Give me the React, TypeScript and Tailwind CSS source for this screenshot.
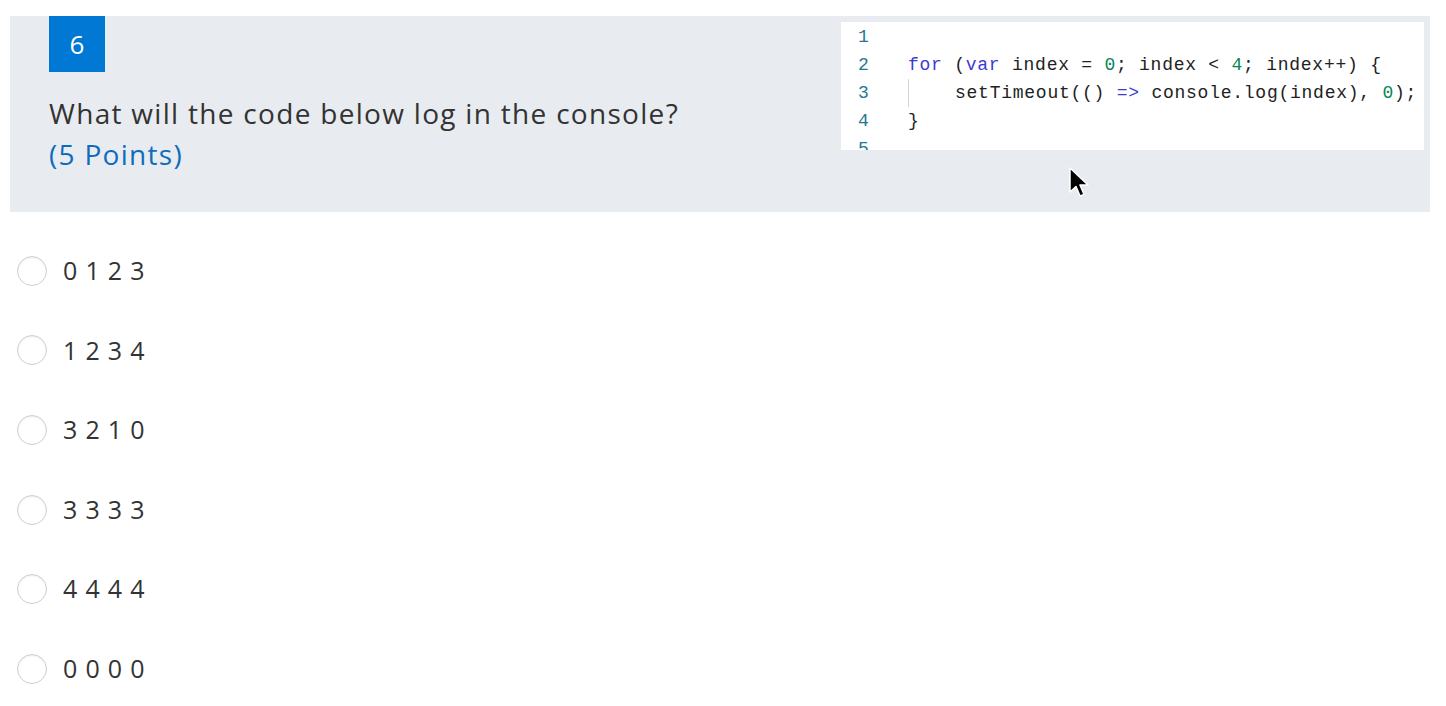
import React from 'react';

const options = ['0 1 2 3', '1 2 3 4', '3 2 1 0', '3 3 3 3', '4 4 4 4', '0 0 0 0'];

const kw = 'text-[#3b3bd4]';
const num = 'text-[#098658]';

const CodeSnippet: React.FC = () => {
  return (
    <div
      className="mt-[6px] mr-[6px] w-[583px] h-[128px] overflow-hidden bg-white pl-[17px] pt-[1px] text-[18px] leading-[28px] tracking-[0.75px] text-[#222]"
      style={{ fontFamily: '"Liberation Mono", "DejaVu Sans Mono", monospace' }}
    >
      <div className="flex">
        <div className="w-[50px] text-[#237893]">1</div>
        <div></div>
      </div>
      <div className="flex">
        <div className="w-[50px] text-[#237893]">2</div>
        <div className="whitespace-pre">
          <span className={kw}>for</span> (<span className={kw}>var</span> index = <span className={num}>0</span>; index &lt; <span className={num}>4</span>; index++) {'{'}
        </div>
      </div>
      <div className="flex">
        <div className="w-[50px] text-[#237893]">3</div>
        <div className="flex whitespace-pre">
          <div className="w-[47px] border-l border-[#d4d4d4]"></div>
          <span>
            setTimeout(() <span className={kw}>=&gt;</span> console.log(index), <span className={num}>0</span>);
          </span>
        </div>
      </div>
      <div className="flex">
        <div className="w-[50px] text-[#237893]">4</div>
        <div>{'}'}</div>
      </div>
      <div className="flex">
        <div className="w-[50px] text-[#237893]">5</div>
        <div></div>
      </div>
    </div>
  );
};

const Radio: React.FC = () => (
  <div className="w-[30px] h-[30px] rounded-full border border-[#cfcfcf] bg-white shadow-[inset_0_1px_2px_rgba(0,0,0,0.08)]"></div>
);

const App: React.FC = () => {
  return (
    <div
      className="relative w-[1446px] h-[706px] bg-white pt-[16px] text-[#333]"
      style={{ fontFamily: '"Open Sans", "Noto Sans", sans-serif' }}
    >
      <div className="ml-[10px] w-[1420px] h-[196px] bg-[#e8ecf0] flex justify-between items-start">
        <div className="pl-[39px]">
          <div className="w-[56px] h-[56px] bg-[#0078d4] text-white flex items-center justify-center text-[26px] font-medium">6</div>
          <div className="mt-[21px] text-[28px] leading-[40px] tracking-[1.3px] text-[#333]">
            What will the code below log in the console?
          </div>
          <div className="text-[28px] leading-[42px] tracking-[1.3px] text-[#0f6cbd]">(5 Points)</div>
        </div>
        <CodeSnippet />
      </div>

      <div className="mt-[19px]">
        {options.map((opt) => (
          <div key={opt} className="h-[79.6px] flex items-center pl-[17px] gap-[16px]">
            <Radio />
            <span className="text-[25px] tracking-[0.8px] text-[#333]">{opt}</span>
          </div>
        ))}
      </div>

      {/* mouse pointer */}
      <svg className="absolute left-[1068px] top-[167px]" width="22" height="32" viewBox="0 0 22 32">
        <path d="M2 1 L2 25 L8 19.5 L12 29 L16 27.5 L12 18 L20 18 Z" fill="#000" stroke="#fff" strokeWidth="1.5" strokeLinejoin="round" />
      </svg>
    </div>
  );
};

export default App;
